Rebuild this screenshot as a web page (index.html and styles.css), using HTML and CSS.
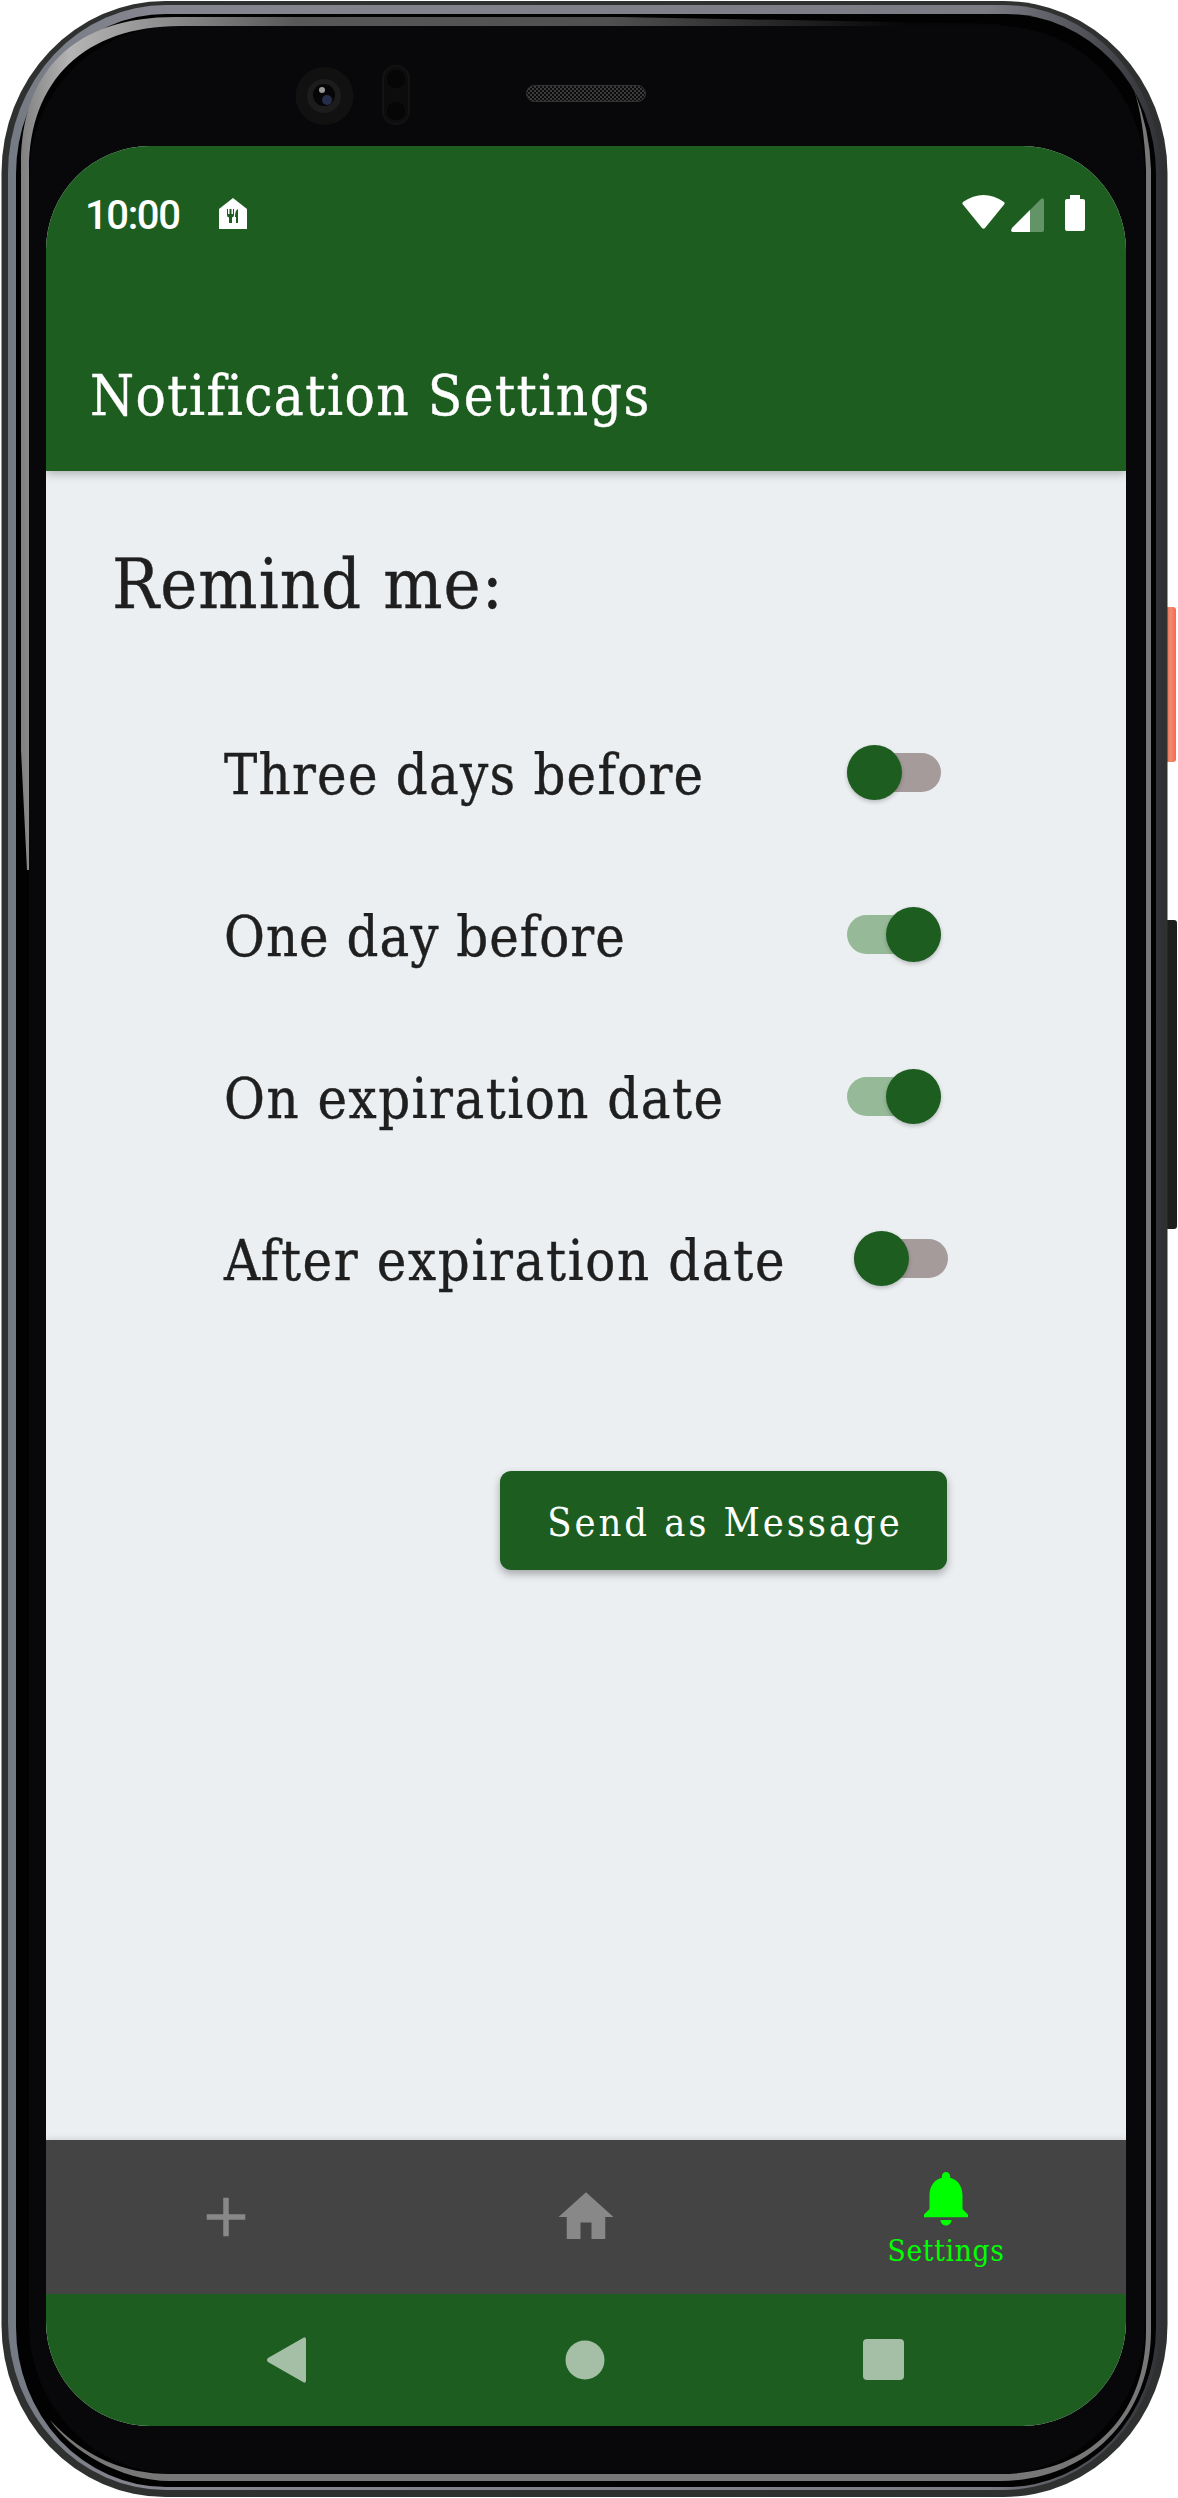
FILE: index.html
```html
<!DOCTYPE html>
<html lang="en">
<head>
<meta charset="utf-8">
<title>Notification Settings</title>
<link rel="stylesheet" href="styles.css">
</head>
<body>
<div class="phone">
  <svg class="frame" viewBox="0 0 1178 2498" aria-hidden="true">
    <defs>
      <linearGradient id="rim" x1="0" y1="0" x2="1" y2="0">
        <stop offset="0" stop-color="#747a83"/><stop offset=".12" stop-color="#85858f"/><stop offset=".85" stop-color="#7b7b84"/><stop offset="1" stop-color="#303236"/>
      </linearGradient>
      <linearGradient id="shine" x1="0" y1="0" x2="1" y2="0">
        <stop offset="0" stop-color="#808080"/><stop offset=".05" stop-color="#b4b4b4"/><stop offset=".28" stop-color="#585858"/><stop offset=".6" stop-color="#505050"/><stop offset=".9" stop-color="#070708"/>
      </linearGradient>
      <linearGradient id="orange" x1="0" y1="0" x2="1" y2="0">
        <stop offset="0" stop-color="#e2654a"/><stop offset=".5" stop-color="#f08a70"/><stop offset="1" stop-color="#fa6a4a"/>
      </linearGradient>
      <pattern id="mesh" width="4" height="4" patternUnits="userSpaceOnUse">
        <rect width="4" height="4" fill="#0c0c0c"/><path d="M0 0h2v2h-2zM2 2h2v2h-2z" fill="#3a3a3a"/>
      </pattern>
    </defs>
    <rect x="1165" y="607" width="11" height="155" rx="3" fill="url(#orange)"/>
    <rect x="1165" y="920" width="12" height="309" rx="3" fill="#1e1e1e"/>
    <rect x="1.500" y="1" width="1166" height="2496" rx="164" ry="172" fill="#2f3030"/>
    <rect x="8" y="5" width="1153" height="2485" rx="158" ry="168" fill="url(#rim)"/>
    <rect x="16" y="14" width="1140" height="2473" rx="150" ry="160" fill="#020203"/>
    <rect x="29" y="26" width="1116" height="2448" rx="146" ry="150" fill="#08080a"/>
    <path d="M21 750V165C21 70 75 17 175 17H620L1000 24V26H180C85 26 29 80 29 170V870H27z" fill="url(#shine)"/>
    <path d="M1146 2330V170Q1144 120 1134 90Q1150 130 1151 170V2330C1151 2420 1085 2481 1000 2481H170C120 2481 70 2450 50 2420Q100 2474 170 2474H1000C1085 2474 1146 2420 1146 2330z" fill="#777"/>
    <circle cx="324.500" cy="96" r="29" fill="#111112"/>
    <circle cx="324" cy="96" r="17" fill="#1c1c1d"/>
    <circle cx="324" cy="95" r="11" fill="#060609"/>
    <circle cx="322" cy="90" r="3" fill="#999"/>
    <circle cx="327" cy="100" r="5" fill="#252e49"/>
    <rect x="383" y="66" width="26" height="58" rx="13" fill="#0c0c0d" stroke="#131314" stroke-width="2"/>
    <circle cx="396" cy="79" r="10" fill="#060607" stroke="#101011"/>
    <circle cx="396" cy="111" r="10" fill="#060607" stroke="#101011"/>
    <rect x="526.500" y="85.500" width="119" height="16" rx="8" fill="url(#mesh)" stroke="#333"/>
  </svg>
  <main class="screen">
    <header class="top">
      <div class="status">
        <span class="clock">10:00</span>
        <svg class="food" width="28" height="31" viewBox="0 0 28 31"><path d="M14 0 28 11V31H0V11z" fill="#fff"/><path d="M8 11v6q0 2 2 2.500V25h3v-5.500q2-.5 2-2.500v-6h-1v5h-1.500v-5h-2v5H9v-5zM19 11q-3 1-3 8h1v6h2z" fill="#1d5e20"/></svg>
        <span class="signals">
          <svg width="43" height="34" viewBox="0 0 43 34"><path d="M1 7Q21.500-7 42 7Q43 8 42.500 9L23 33Q21.500 34.500 20 33L.5 9Q0 8 1 7z" fill="#fff"/></svg>
          <svg class="cell" width="33" height="34" viewBox="0 0 33 34"><path d="M1 30 30 1Q33-1 33 3V32Q33 34 31 34H2Q-1 34 1 30z" fill="#639468"/><path d="M1 30 19 12V34H2Q-1 34 1 30z" fill="#fff"/></svg>
          <svg class="battery" width="20" height="36" viewBox="0 0 20 36"><path d="M5 0H15V4H18Q20 4 20 6V34Q20 36 18 36H2Q0 36 0 34V6Q0 4 2 4H5z" fill="#fff"/></svg>
        </span>
      </div>
      <h1 class="title">Notification Settings</h1>
    </header>
    <section class="content">
      <h2 class="heading">Remind me:</h2>
      <div class="options">
        <div class="row"><span class="label three">Three days before</span><span class="switch"><i class="knob"></i></span></div>
        <div class="row"><span class="label one">One day before</span><span class="switch on"><i class="knob"></i></span></div>
        <div class="row"><span class="label exp">On expiration date</span><span class="switch on"><i class="knob"></i></span></div>
        <div class="row last"><span class="label after">After expiration date</span><span class="switch"><i class="knob"></i></span></div>
      </div>
      <button class="send">Send as Message</button>
    </section>
    <nav class="tabs">
      <a class="tab"><svg width="66" height="66" viewBox="0 0 24 24"><path d="M19 13h-6v6h-2v-6H5v-2h6V5h2v6h6z"/></svg></a>
      <a class="tab"><svg width="66" height="66" viewBox="0 0 24 24"><path d="M10 20v-6h4v6h5v-8h3L12 3 2 12h3v8z"/></svg></a>
      <a class="tab active"><svg width="66" height="66" viewBox="0 0 24 24"><path d="M12 22c1.100 0 2-.9 2-2h-4c0 1.100.89 2 2 2zm6-6v-5c0-3.070-1.640-5.640-4.500-6.320V4c0-.83-.67-1.500-1.500-1.500s-1.500.67-1.500 1.500v.68C7.630 5.360 6 7.920 6 11v5l-2 2v1h16v-1l-2-2z"/></svg><span class="tablabel">Settings</span></a>
    </nav>
    <footer class="system">
      <svg width="40" height="46" viewBox="0 0 40 46"><path d="M36 1Q39-1 39 3V43Q39 47 36 45L1 25Q-1 23 1 21z"/></svg>
      <svg width="40" height="40" viewBox="0 0 40 40"><circle cx="20" cy="20" r="19.500"/></svg>
      <svg width="42" height="42" viewBox="0 0 42 42"><rect width="41" height="41" rx="4"/></svg>
    </footer>
  </main>
</div>
</body>
</html>
```
FILE: styles.css
```css
* { box-sizing: border-box; }
body { margin: 0; background: #fff; }
svg { display: block; }
.phone {
  position: relative;
  width: 1178px;
  height: 2498px;
  padding: 146px 52px 72px 46px;
  font-family: "DejaVu Serif Condensed", "DejaVu Serif", serif;
  font-stretch: condensed;
}
.frame { position: absolute; inset: 0; width: 1178px; height: 2498px; }
.screen {
  position: relative;
  display: flex;
  flex-direction: column;
  width: 1080px;
  height: 2280px;
  border-radius: 104px;
  overflow: hidden;
  background: #ebeff2;
}
.top {
  height: 325px;
  background: #1d5e20;
  color: #fff;
  box-shadow: 0 2px 10px rgba(0, 0, 0, .3);
}
.status { display: flex; height: 137px; padding: 0 41px 0 39px; align-items: flex-start; }
.clock { width: 133.500px; padding-top: 46px; font: 500 40px/47px Roboto, sans-serif; letter-spacing: -1.400px; }
.food { margin-top: 52px; }
.signals { display: flex; margin: 49px 0 0 auto; align-items: flex-start; }
.cell { margin: 3px 21px 0 6px; }
.title, .heading, .label { white-space: nowrap; -webkit-text-stroke: .4px currentColor; }
.title { margin: 0; padding-left: 44px; height: 188px; font-weight: 400; font-size: 56px; line-height: 226px; letter-spacing: 1.450px; }
.content { flex: 1; display: flex; flex-direction: column; color: #1f1f1f; }
.heading { margin: 0; padding-left: 66px; height: 220px; font-weight: 400; font-size: 69.500px; line-height: 225px; letter-spacing: 1.100px; }
.options { padding: 0 185px 0 178px; }
.row { display: flex; justify-content: space-between; align-items: center; height: 162px; }
.row.last { margin-right: -7px; }
.label { padding-top: 5px; font-size: 55.500px; line-height: 70px; }
.three { letter-spacing: 1.250px; }
.one { letter-spacing: 1px; }
.exp { letter-spacing: 1.500px; }
.after { letter-spacing: 1.650px; }
.switch { display: flex; align-items: center; width: 94px; height: 39px; border-radius: 20px; background: #a59b9a; }
.switch.on { justify-content: flex-end; background: #96ba98; }
.knob { width: 55px; height: 55px; flex: none; border-radius: 50%; background: #1d5e20; box-shadow: 0 2px 4px rgba(0, 0, 0, .22); }
.send {
  width: 447px;
  height: 99px;
  margin: 132px 0 0 454px;
  padding: 2px 0 0 3px;
  border: 0;
  border-radius: 11px;
  background: #1d5e20;
  color: #fff;
  font-family: inherit;
  font-stretch: condensed;
  font-size: 39.500px;
  letter-spacing: 2.900px;
  box-shadow: 0 4px 8px rgba(0, 0, 0, .3);
}
.tabs { display: flex; height: 154px; background: #444; box-shadow: 0 -1px 6px rgba(0, 0, 0, .12); }
.tab { flex: 1; display: flex; flex-direction: column; align-items: center; padding-top: 44px; fill: #888; }
.tab.active { padding-top: 25px; color: #0f0; fill: #0f0; }
.tablabel { padding-top: 3px; font-size: 29.500px; line-height: 34px; letter-spacing: .7px; }
.system { display: flex; align-items: center; height: 132px; padding: 0 221px; justify-content: space-between; background: #1d5e20; fill: #a5bfa6; }
```
